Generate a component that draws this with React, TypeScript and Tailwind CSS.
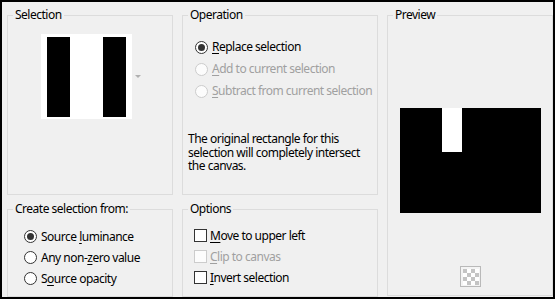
import React from 'react';

const font = { fontFamily: '"Noto Sans", "Open Sans", sans-serif' };

const Radio: React.FC<{ checked?: boolean; disabled?: boolean }> = ({ checked, disabled }) => (
  <span
    className={`w-[13px] h-[13px] shrink-0 rounded-full border flex items-center justify-center ${
      disabled ? 'border-[#cccccc] bg-[#fcfcfc]' : 'border-[#333333] bg-white'
    }`}
  >
    {checked && <span className="w-[7px] h-[7px] rounded-full bg-[#333333]" />}
  </span>
);

const Check: React.FC<{ disabled?: boolean }> = ({ disabled }) => (
  <span className={`w-[13px] h-[13px] shrink-0 border ${disabled ? 'border-[#cccccc] bg-[#fcfcfc]' : 'border-[#333333] bg-white'}`} />
);

// label with an underlined access key
const Label: React.FC<{ pre?: string; k: string; post: string; disabled?: boolean }> = ({ pre = '', k, post, disabled }) => (
  <span className={`whitespace-nowrap ${disabled ? 'text-[#a0a0a0]' : 'text-black'}`}>
    {pre}
    <u className="underline-offset-2">{k}</u>
    {post}
  </span>
);

const Group: React.FC<{ title: string; className?: string; children: React.ReactNode }> = ({ title, className = '', children }) => (
  <fieldset className={`border border-[#dcdcdc] min-w-0 ${className}`}>
    <legend className="ml-[5px] px-[2px] leading-[16px] text-black">{title}</legend>
    {children}
  </fieldset>
);

const Checker = () => (
  <svg width="21" height="21" viewBox="0 0 21 21">
    <rect x="0.5" y="0.5" width="20" height="20" fill="#f4f4f4" stroke="#b9b9b9" />
    {[0, 1, 2, 3].map(r =>
      [0, 1, 2, 3].map(c => (
        <rect
          key={`${r}-${c}`}
          x={3 + c * 4}
          y={3 + r * 4}
          width="4"
          height="4"
          fill={(r + c) % 2 === 0 ? '#c4c4c4' : '#ffffff'}
        />
      ))
    )}
  </svg>
);

export default function App() {
  return (
    <div className="w-[555px] h-[299px] bg-[#f0f0f0] border-2 border-black text-[12px] tracking-[-0.5px] pt-[5px] pl-[5px]" style={font}>
      <div className="grid grid-cols-[166px_196px_166px] grid-rows-[188px_96px] gap-x-[9px] gap-y-[6px]">
        <Group title="Selection">
          <div className="flex items-center pt-[11px] pl-[33px]">
            <div className="w-[91px] h-[85px] bg-white flex justify-between px-[6px] pt-[3px] pb-[2px]">
              <div className="w-[23px] h-full bg-black" />
              <div className="w-[23px] h-full bg-black" />
            </div>
            <div className="ml-[3px] w-0 h-0 border-l-[3px] border-r-[3px] border-t-[3px] border-l-transparent border-r-transparent border-t-[#b0b0b0]" />
          </div>
        </Group>

        <Group title="Operation">
          <div className="pt-[13px] pl-[12px]">
            <div className="flex items-center gap-[4px] h-[22px]">
              <Radio checked />
              <Label k="R" post="eplace selection" />
            </div>
            <div className="flex items-center gap-[4px] h-[22px]">
              <Radio disabled />
              <Label k="A" post="dd to current selection" disabled />
            </div>
            <div className="flex items-center gap-[4px] h-[22px]">
              <Radio disabled />
              <Label k="S" post="ubtract from current selection" disabled />
            </div>
          </div>
          <p className="mt-[30px] pl-[5px] leading-[13.5px] text-black">
            <span className="block whitespace-nowrap">The original rectangle for this</span>
            <span className="block whitespace-nowrap">selection will completely intersect</span>
            <span className="block whitespace-nowrap">the canvas.</span>
          </p>
        </Group>

        <Group title="Preview" className="row-span-2 mb-[1px]">
          <div className="flex flex-col items-center pt-[85px]">
            <div className="w-[141px] h-[105px] bg-black pl-[42px]">
              <div className="w-[20px] h-[44px] bg-white" />
            </div>
            <div className="mt-[53px]">
              <Checker />
            </div>
          </div>
        </Group>

        <Group title="Create selection from:">
          <div className="pt-[9px] pl-[16px]">
            <div className="flex items-center gap-[4px] h-[21px]">
              <Radio checked />
              <Label pre="Source " k="l" post="uminance" />
            </div>
            <div className="flex items-center gap-[4px] h-[21px]">
              <Radio />
              <Label pre="Any non-" k="z" post="ero value" />
            </div>
            <div className="flex items-center gap-[4px] h-[21px]">
              <Radio />
              <Label pre="S" k="o" post="urce opacity" />
            </div>
          </div>
        </Group>

        <Group title="Options">
          <div className="pt-[8px] pl-[11px]">
            <div className="flex items-center gap-[3px] h-[21px]">
              <Check />
              <Label k="M" post="ove to upper left" />
            </div>
            <div className="flex items-center gap-[3px] h-[21px]">
              <Check disabled />
              <Label k="C" post="lip to canvas" disabled />
            </div>
            <div className="flex items-center gap-[3px] h-[21px]">
              <Check />
              <Label k="I" post="nvert selection" />
            </div>
          </div>
        </Group>
      </div>
    </div>
  );
}
